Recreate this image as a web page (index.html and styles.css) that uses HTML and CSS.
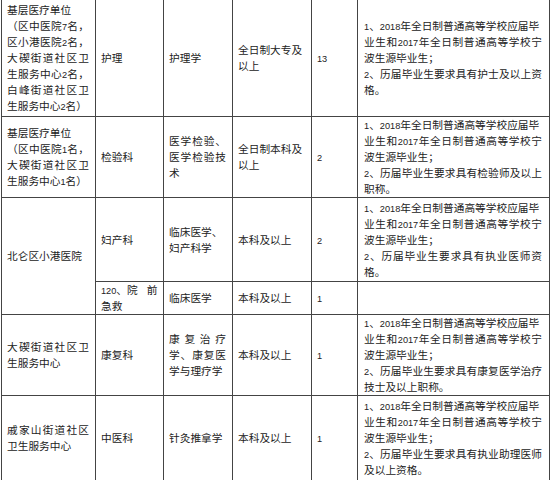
FILE: index.html
```html
<!DOCTYPE html>
<html lang="zh-CN">
<head>
<meta charset="utf-8">
<title>招聘岗位表</title>
<link rel="stylesheet" href="styles.css">
</head>
<body>
<table class="jobs">
  <colgroup>
    <col class="c1"><col class="c2"><col class="c3"><col class="c4"><col class="c5"><col class="c6">
  </colgroup>
  <tbody>
    <tr class="r1">
      <td>
        <span class="l e">基层医疗单位</span>
        <span class="l">（区中医院<span class="n">7</span>名，</span>
        <span class="l">区小港医院<span class="n">2</span>名，</span>
        <span class="l">大碶街道社区卫</span>
        <span class="l">生服务中心<span class="n">2</span>名，</span>
        <span class="l">白峰街道社区卫</span>
        <span class="l e">生服务中心<span class="n">2</span>名）</span>
      </td>
      <td>护理</td>
      <td>护理学</td>
      <td><span class="l e">全日制大专及</span><span class="l e">以上</span></td>
      <td><span class="n">13</span></td>
      <td>
        <span class="l e"><span class="n">1</span>、<span class="n">2018</span>年全日制普通高等学校应届毕</span>
        <span class="l">业生和<span class="n">2017</span>年全日制普通高等学校宁</span>
        <span class="l e">波生源毕业生；</span>
        <span class="l"><span class="n">2</span>、历届毕业生要求具有护士及以上资</span>
        <span class="l e">格。</span>
      </td>
    </tr>
    <tr class="r2">
      <td>
        <span class="l e">基层医疗单位</span>
        <span class="l">（区中医院<span class="n">1</span>名，</span>
        <span class="l">大碶街道社区卫</span>
        <span class="l e">生服务中心<span class="n">1</span>名）</span>
      </td>
      <td>检验科</td>
      <td>
        <span class="l">医学检验、</span>
        <span class="l">医学检验技</span>
        <span class="l e">术</span>
      </td>
      <td><span class="l e">全日制本科及</span><span class="l e">以上</span></td>
      <td><span class="n">2</span></td>
      <td>
        <span class="l e"><span class="n">1</span>、<span class="n">2018</span>年全日制普通高等学校应届毕</span>
        <span class="l">业生和<span class="n">2017</span>年全日制普通高等学校宁</span>
        <span class="l e">波生源毕业生；</span>
        <span class="l"><span class="n">2</span>、历届毕业生要求具有检验师及以上</span>
        <span class="l e">职称。</span>
      </td>
    </tr>
    <tr class="r3">
      <td rowspan="2">北仑区小港医院</td>
      <td>妇产科</td>
      <td><span class="l e">临床医学、</span><span class="l e">妇产科学</span></td>
      <td>本科及以上</td>
      <td><span class="n">2</span></td>
      <td>
        <span class="l e"><span class="n">1</span>、<span class="n">2018</span>年全日制普通高等学校应届毕</span>
        <span class="l">业生和<span class="n">2017</span>年全日制普通高等学校宁</span>
        <span class="l e">波生源毕业生；</span>
        <span class="l"><span class="n">2</span>、历届毕业生要求具有执业医师资</span>
        <span class="l e">格。</span>
      </td>
    </tr>
    <tr class="r4">
      <td><span class="l e"><span class="n">120</span>、院<span class="sp"></span>前</span><span class="l e">急救</span></td>
      <td>临床医学</td>
      <td>本科及以上</td>
      <td><span class="n">1</span></td>
      <td></td>
    </tr>
    <tr class="r5">
      <td><span class="l">大碶街道社区卫</span><span class="l e">生服务中心</span></td>
      <td>康复科</td>
      <td>
        <span class="l">康复治疗</span>
        <span class="l">学、康复医</span>
        <span class="l e">学与理疗学</span>
      </td>
      <td>本科及以上</td>
      <td><span class="n">1</span></td>
      <td>
        <span class="l e"><span class="n">1</span>、<span class="n">2018</span>年全日制普通高等学校应届毕</span>
        <span class="l">业生和<span class="n">2017</span>年全日制普通高等学校宁</span>
        <span class="l e">波生源毕业生；</span>
        <span class="l"><span class="n">2</span>、历届毕业生要求具有康复医学治疗</span>
        <span class="l e">技士及以上职称。</span>
      </td>
    </tr>
    <tr class="r6">
      <td><span class="l">戚家山街道社区</span><span class="l e">卫生服务中心</span></td>
      <td>中医科</td>
      <td>针灸推拿学</td>
      <td>本科及以上</td>
      <td><span class="n">1</span></td>
      <td>
        <span class="l e"><span class="n">1</span>、<span class="n">2018</span>年全日制普通高等学校应届毕</span>
        <span class="l">业生和<span class="n">2017</span>年全日制普通高等学校宁</span>
        <span class="l e">波生源毕业生；</span>
        <span class="l"><span class="n">2</span>、历届毕业生要求具有执业助理医师</span>
        <span class="l e">及以上资格。</span>
      </td>
    </tr>
  </tbody>
</table>
</body>
</html>
```

FILE: styles.css
```css
html, body {
  margin: 0;
  padding: 0;
  background: #ffffff;
}

body {
  padding-left: 1px;
  overflow: hidden;
  font-family: "Liberation Sans", "Noto Sans CJK SC", sans-serif;
  font-size: 10.7px;
  line-height: 16px;
  color: #222222;
}

.jobs {
  border-collapse: collapse;
  table-layout: fixed;
  width: 549px;
  margin-top: -1px;
}

.c1 { width: 94px; }
.c2 { width: 68px; }
.c3 { width: 69px; }
.c4 { width: 79px; }
.c5 { width: 46px; }
.c6 { width: 192px; }

.jobs td {
  border: 1px solid #444444;
  padding: 0 6px 0 5px;
  vertical-align: middle;
  text-align: left;
}

.jobs td:last-child {
  padding-left: 6px;
  padding-right: 7px;
}

.r1 { height: 117px; }
.r2 { height: 81px; }
.r3 { height: 84px; }
.r4 { height: 32px; }
.r5 { height: 80px; }
.r6 { height: 85px; }

.l {
  display: block;
  white-space: nowrap;
  text-align: justify;
  text-align-last: justify;
}

.l.e {
  text-align-last: left;
}

.n {
  font-size: 9.2px;
  line-height: 1;
}

.sp {
  display: inline-block;
  width: 9px;
}
```
